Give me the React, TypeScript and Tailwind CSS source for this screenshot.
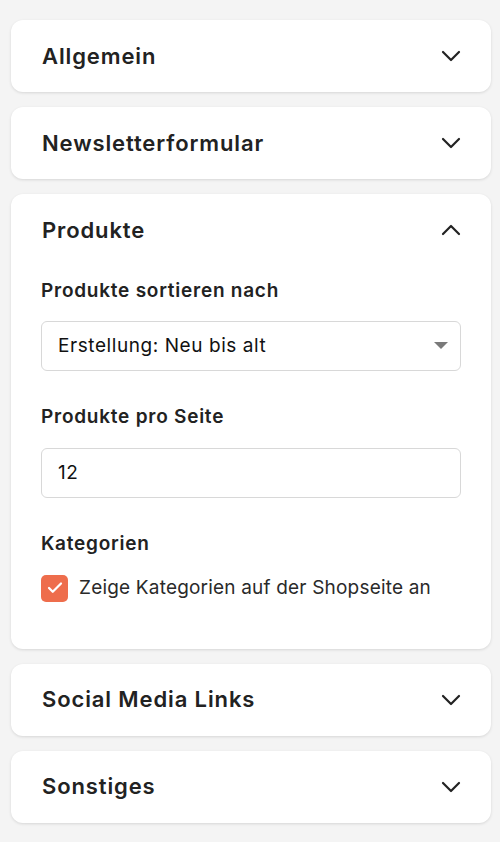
import { Check } from "lucide-react";

const font = { fontFamily: "Inter, 'Noto Sans', sans-serif" };

function Chevron({ up = false }: { up?: boolean }) {
  return (
    <svg width="20" height="12" viewBox="0 0 20 12" fill="none" className={up ? "rotate-180" : ""}>
      <path d="M2 2 L10 10 L18 2" stroke="#222" strokeWidth="2.2" strokeLinecap="round" strokeLinejoin="round" />
    </svg>
  );
}

function Section({ title, open = false, children }: { title: string; open?: boolean; children?: React.ReactNode }) {
  return (
    <div className="rounded-xl bg-white shadow-[0_1px_3px_rgba(0,0,0,0.12)]">
      <div className="flex h-[72px] items-center justify-between pl-[31px] pr-[30px]">
        <h2 className="text-[22px] font-semibold tracking-[0.04em] text-[#222]">{title}</h2>
        <Chevron up={open} />
      </div>
      {children}
    </div>
  );
}

export default function App() {
  return (
    <div className="min-h-[842px] bg-[#f4f4f4] pl-[11px] pr-[9px] pt-5 pb-4" style={font}>
      <div className="flex flex-col gap-[15px]">
        <Section title="Allgemein" />
        <Section title="Newsletterformular" />
        <Section title="Produkte" open>
          <div className="flex flex-col px-[30px] pb-[46px] pt-[13px]">
            <label className="text-[19px] leading-6 font-semibold tracking-[0.04em] text-[#222]">
              Produkte sortieren nach
            </label>
            <div className="mt-[18px] flex h-[50px] items-center justify-between rounded-md border border-[#d8d8d8] pl-4 pr-3">
              <span className="text-[19px] tracking-[0.03em] text-[#111]">Erstellung: Neu bis alt</span>
              <svg width="14" height="8" viewBox="0 0 14 8">
                <path d="M0 0 L14 0 L7 7 Z" fill="#7a7a7a" />
              </svg>
            </div>

            <label className="mt-[34px] text-[19px] leading-6 font-semibold tracking-[0.04em] text-[#222]">
              Produkte pro Seite
            </label>
            <div className="mt-[19px] flex h-[50px] items-center rounded-md border border-[#d8d8d8] pl-4">
              <span className="text-[19px] tracking-[0.03em] text-[#111]">12</span>
            </div>

            <label className="mt-[34px] text-[19px] leading-6 font-semibold tracking-[0.04em] text-[#222]">
              Kategorien
            </label>
            <div className="mt-[18px] flex items-center gap-[11px]">
              <span className="flex h-[27px] w-[27px] items-center justify-center rounded-[5px] bg-[#ee6d4c]">
                <Check className="h-[18px] w-[18px] text-white" strokeWidth={3} />
              </span>
              <span className="text-[19px] tracking-[0.01em] text-[#2a2a2a]">Zeige Kategorien auf der Shopseite an</span>
            </div>
          </div>
        </Section>
        <Section title="Social Media Links" />
        <Section title="Sonstiges" />
      </div>
    </div>
  );
}
